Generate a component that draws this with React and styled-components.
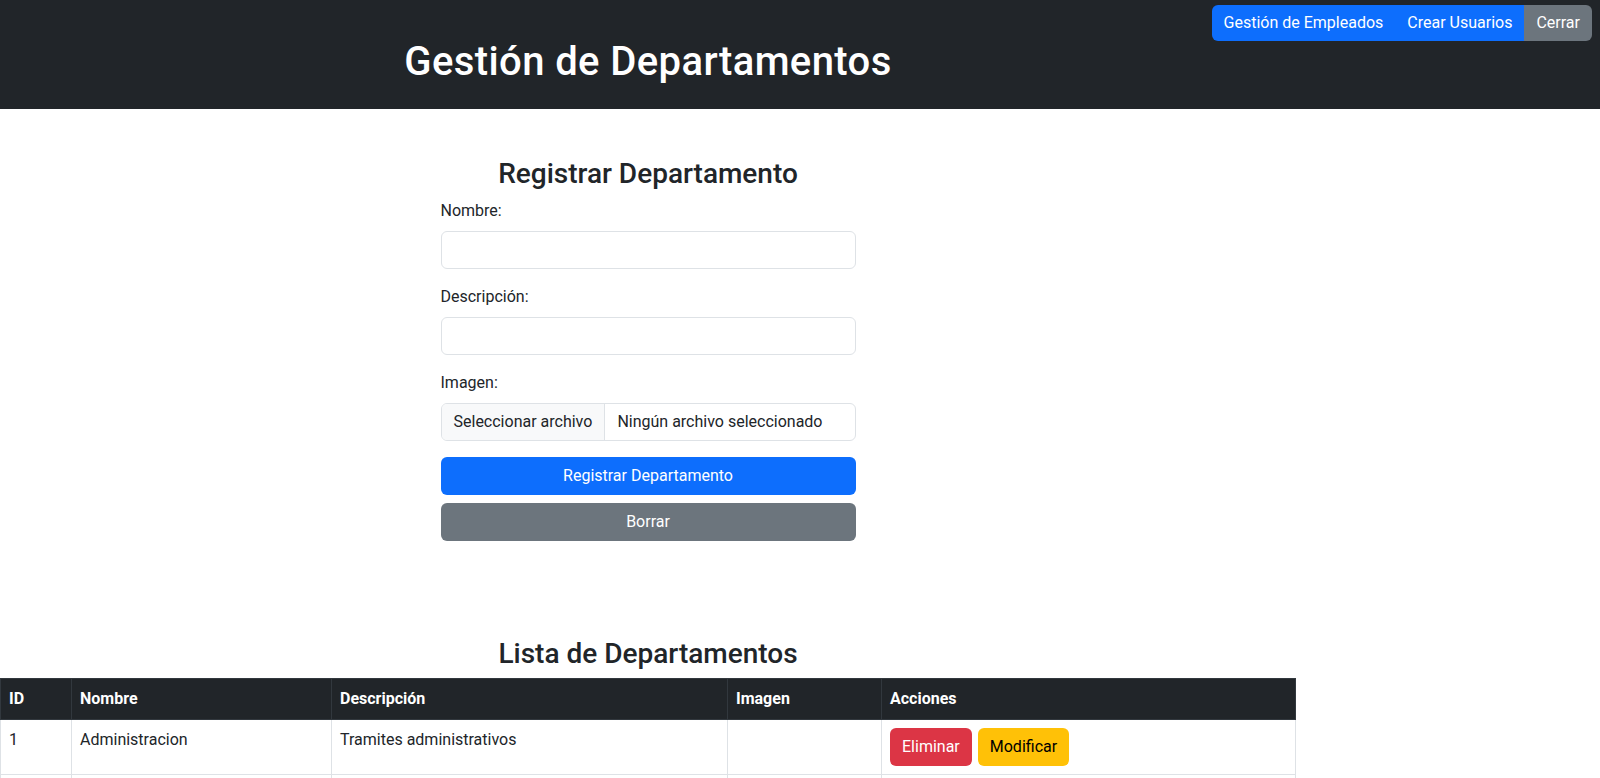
import React, { useState } from 'react';
import styled, { createGlobalStyle } from 'styled-components';

const GlobalStyle = createGlobalStyle`
    * { box-sizing: border-box; }
    body {
        margin: 0;
        font-family: Roboto, "Noto Sans", Arial, sans-serif;
        font-size: 16px;
        line-height: 1.5;
        color: #212529;
        background: #fff;
    }
`;

// Top bar: title and nav share one grid cell, nav sits over the right side
const TopBar = styled.header`
    display: grid;
    grid-template-columns: 1fr;
    height: 109px;
    background-color: #212529;
`;

const TitleArea = styled.div`
    grid-area: 1 / 1;
    width: 1296px;
    padding-top: 38px;
    text-align: center;
`;

const MainTitle = styled.h1`
    margin: 0;
    font-size: 40px;
    font-weight: 500;
    line-height: 1.2;
    letter-spacing: 0.4px;
    color: #fff;
`;

const NavGroup = styled.nav`
    grid-area: 1 / 1;
    justify-self: end;
    align-self: start;
    display: flex;
    margin: 5px 8px 0 0;
    border-radius: 6px;
    overflow: hidden;
`;

const NavButton = styled.button`
    border: none;
    padding: 6px 12px;
    font: inherit;
    font-size: 16px;
    line-height: 1.5;
    color: #fff;
    cursor: pointer;
    background-color: ${(p) => (p.$variant === 'secondary' ? '#6c757d' : '#0d6efd')};
    white-space: nowrap;
`;

// Page body
const Main = styled.main`
    width: 1296px;
    display: flex;
    flex-direction: column;
    align-items: center;
`;

const FormCard = styled.form`
    width: 415px;
    margin-top: 48px;
`;

const SectionTitle = styled.h3`
    margin: 0 0 8px;
    font-size: 28px;
    font-weight: 500;
    line-height: 1.2;
    text-align: center;
`;

const Field = styled.div`
    margin-bottom: 16px;
`;

const Label = styled.label`
    display: block;
    margin-bottom: 8px;
`;

const TextInput = styled.input`
    display: block;
    width: 100%;
    height: 38px;
    padding: 6px 12px;
    font: inherit;
    border: 1px solid #dee2e6;
    border-radius: 6px;
    outline: none;
`;

const FileBox = styled.label`
    display: flex;
    align-items: center;
    height: 38px;
    border: 1px solid #dee2e6;
    border-radius: 6px;
    overflow: hidden;
    cursor: pointer;
`;

const FilePick = styled.span`
    display: flex;
    align-items: center;
    height: 100%;
    padding: 0 12px;
    background-color: #f8f9fa;
    border-right: 1px solid #dee2e6;
`;

const FileName = styled.span`
    padding: 0 12px;
`;

const HiddenFile = styled.input`
    display: none;
`;

const WideButton = styled.button`
    display: block;
    width: 100%;
    height: 38px;
    margin-top: ${(p) => p.$mt || 0}px;
    border: none;
    border-radius: 6px;
    font: inherit;
    color: #fff;
    cursor: pointer;
    background-color: ${(p) => (p.$variant === 'secondary' ? '#6c757d' : '#0d6efd')};
`;

const ListSection = styled.section`
    width: 100%;
    margin-top: 96px;
`;

const Table = styled.table`
    width: 100%;
    border-collapse: collapse;
    vertical-align: top;
`;

const Th = styled.th`
    width: ${(p) => p.$w}px;
    padding: 8px;
    text-align: left;
    font-weight: 700;
    color: #fff;
    background-color: #212529;
    border: 1px solid #32383e;
`;

const Td = styled.td`
    padding: 8px;
    border: 1px solid #dee2e6;
    vertical-align: top;
`;

const ActionButton = styled.button`
    height: 38px;
    margin-right: 6px;
    padding: 6px 12px;
    border: none;
    border-radius: 6px;
    font: inherit;
    cursor: pointer;
    color: ${(p) => (p.$variant === 'danger' ? '#fff' : '#000')};
    background-color: ${(p) => (p.$variant === 'danger' ? '#dc3545' : '#ffc107')};
`;

const departamentos = [
    { id: 1, nombre: 'Administracion', descripcion: 'Tramites administrativos' },
    { id: 2, nombre: 'Recursos Humanos', descripcion: 'Gestión del personal' },
];

const App = () => {
    const [nombre, setNombre] = useState('');
    const [descripcion, setDescripcion] = useState('');

    return (
        <>
            <GlobalStyle />
            <TopBar>
                <TitleArea>
                    <MainTitle>Gestión de Departamentos</MainTitle>
                </TitleArea>
                <NavGroup>
                    <NavButton>Gestión de Empleados</NavButton>
                    <NavButton>Crear Usuarios</NavButton>
                    <NavButton $variant="secondary">Cerrar</NavButton>
                </NavGroup>
            </TopBar>
            <Main>
                <FormCard onSubmit={(e) => e.preventDefault()}>
                    <SectionTitle>Registrar Departamento</SectionTitle>
                    <Field>
                        <Label>Nombre:</Label>
                        <TextInput value={nombre} onChange={(e) => setNombre(e.target.value)} />
                    </Field>
                    <Field>
                        <Label>Descripción:</Label>
                        <TextInput value={descripcion} onChange={(e) => setDescripcion(e.target.value)} />
                    </Field>
                    <Field>
                        <Label>Imagen:</Label>
                        <FileBox>
                            <FilePick>Seleccionar archivo</FilePick>
                            <FileName>Ningún archivo seleccionado</FileName>
                            <HiddenFile type="file" />
                        </FileBox>
                    </Field>
                    <WideButton type="submit">Registrar Departamento</WideButton>
                    <WideButton type="button" $variant="secondary" $mt={8}>
                        Borrar
                    </WideButton>
                </FormCard>
                <ListSection>
                    <SectionTitle>Lista de Departamentos</SectionTitle>
                    <Table>
                        <thead>
                            <tr>
                                <Th $w={71}>ID</Th>
                                <Th $w={260}>Nombre</Th>
                                <Th $w={396}>Descripción</Th>
                                <Th $w={154}>Imagen</Th>
                                <Th>Acciones</Th>
                            </tr>
                        </thead>
                        <tbody>
                            {departamentos.map((d) => (
                                <tr key={d.id}>
                                    <Td>{d.id}</Td>
                                    <Td>{d.nombre}</Td>
                                    <Td>{d.descripcion}</Td>
                                    <Td></Td>
                                    <Td>
                                        <ActionButton $variant="danger">Eliminar</ActionButton>
                                        <ActionButton>Modificar</ActionButton>
                                    </Td>
                                </tr>
                            ))}
                        </tbody>
                    </Table>
                </ListSection>
            </Main>
        </>
    );
};

export default App;
